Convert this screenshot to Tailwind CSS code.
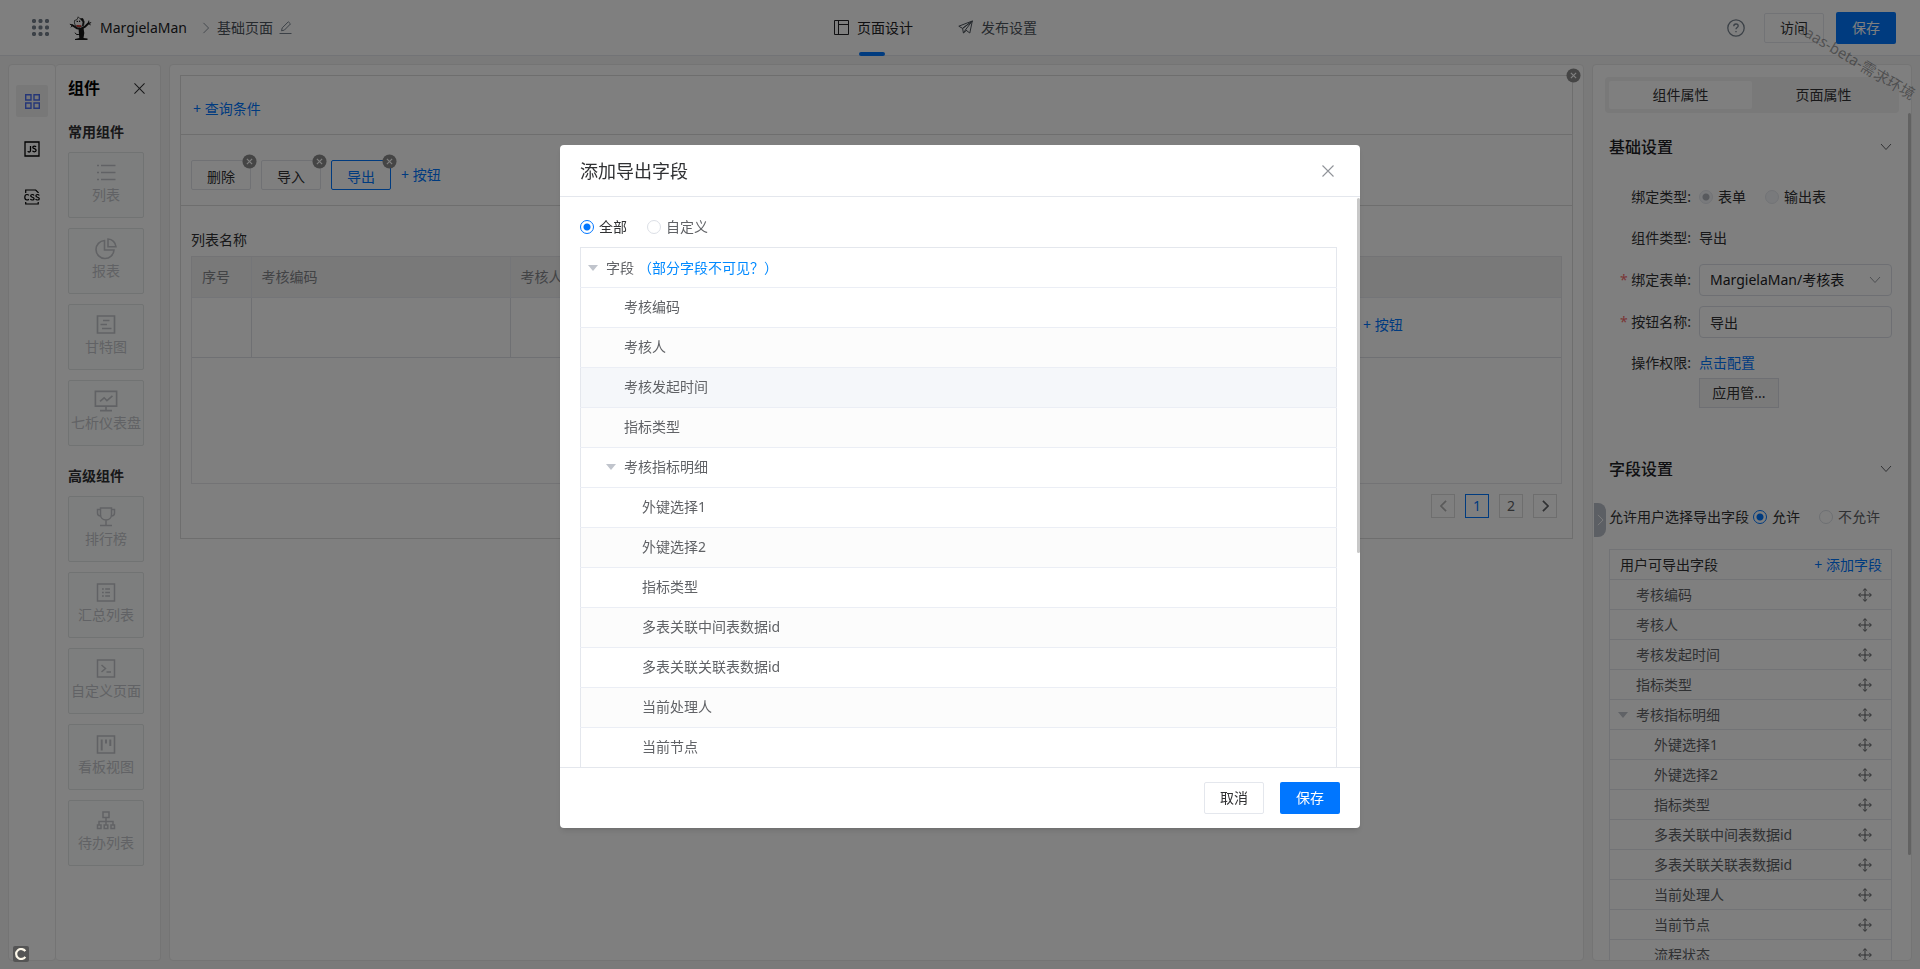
<!DOCTYPE html>
<html lang="zh-CN">
<head>
<meta charset="utf-8">
<title>MargielaMan - 基础页面</title>
<script src="https://cdn.jsdelivr.net/npm/@tailwindcss/browser@4"></script>
</head>
<body class="h-screen overflow-hidden bg-[#f4f4f4] font-['Noto_Sans','Noto_Sans_CJK_SC',sans-serif] text-sm leading-5 text-[#303133]">

<svg class="hidden">
  <symbol id="i-x" viewBox="0 0 12 12"><path d="M.5.500l11 11M11.500.500L.5 11.500" fill="none" stroke="currentColor" stroke-width="1.100"/></symbol>
  <symbol id="i-down" viewBox="0 0 12 8"><path d="M1 1l5 5.500 5-5.500" fill="none" stroke="currentColor"/></symbol>
  <symbol id="i-right" viewBox="0 0 8 14"><path d="M1 1l6 6-6 6" fill="none" stroke="currentColor"/></symbol>
  <symbol id="i-badge" viewBox="0 0 16 16"><circle cx="8" cy="8" r="7.500" fill="currentColor"/><path d="M5.200 5.200l5.600 5.600M10.800 5.200l-5.600 5.600" stroke="#fff" stroke-width="1.300"/></symbol>
  <symbol id="i-move" viewBox="0 0 14 14"><path d="M7 .8v12.400M.8 7h12.400M4.800 2.800L7 .7l2.200 2.100M4.800 11.200L7 13.300l2.200-2.100M2.800 4.800L.7 7l2.100 2.200M11.200 4.800L13.300 7l-2.100 2.200" fill="none" stroke="currentColor"/></symbol>
  <symbol id="c-list" viewBox="0 0 24 24"><path d="M3 4.500h2M3 11.500h2M3 18.500h2M7 4.500h14.500M7 11.500h14.500M7 18.500h14.500" fill="none" stroke="currentColor" stroke-width="1.500"/></symbol>
  <symbol id="c-pie" viewBox="0 0 24 24"><path d="M10.500 3.500a9 9 0 1 0 9.500 9.500h-9.500zM14 2v7.800h8A8.500 8.500 0 0 0 14 2z" fill="none" stroke="currentColor" stroke-width="1.600"/></symbol>
  <symbol id="c-gantt" viewBox="0 0 24 24"><path d="M3.500 3h17v17h-17zM9 7.500h6.500M6.500 11.500H13M8 15.500h9.500" fill="none" stroke="currentColor" stroke-width="1.700"/></symbol>
  <symbol id="c-board" viewBox="0 0 26 24"><path d="M1.500 1.500h23v16h-23zM13 17.500V22M6.500 22.500h13M6.500 12.500l4.500-4 3 3 6-5" fill="none" stroke="currentColor" stroke-width="1.800"/></symbol>
  <symbol id="c-cup" viewBox="0 0 24 24"><path d="M6.500 3h11v6.500c0 3.500-2.500 5.500-5.500 5.500s-5.500-2-5.500-5.500zM6.500 4.500h-3V8c0 1.800 1.300 3 3.200 3M17.500 4.500h3V8c0 1.800-1.300 3-3.200 3M12 15v5M6 20.500h12" fill="none" stroke="currentColor" stroke-width="1.500"/></symbol>
  <symbol id="c-sum" viewBox="0 0 24 24"><path d="M3.500 3h17v17h-17zM8 8h1.800M8 11.500h1.800M8 15h1.800M11.200 8H16M11.200 11.500H16M11.200 15H16" fill="none" stroke="currentColor" stroke-width="1.500"/></symbol>
  <symbol id="c-code" viewBox="0 0 24 24"><path d="M3.500 3h17v17h-17zM7.500 8l4 3.500-4 3.500M12.500 15H17" fill="none" stroke="currentColor" stroke-width="1.500"/></symbol>
  <symbol id="c-kanban" viewBox="0 0 24 24"><path d="M3.500 3h17v17h-17z" fill="none" stroke="currentColor" stroke-width="1.600"/><path d="M7.700 6.500v11M12 6.500v4M16.300 6.500v6.500" stroke="currentColor" stroke-width="2"/></symbol>
  <symbol id="c-tree" viewBox="0 0 24 24"><path d="M9 3h6v5.500H9zM12 8.500V16M5 16v-3.500h14V16M3.500 16h3.500v3.500H3.500zM10.200 16h3.600v3.500h-3.600zM17 16h3.500v3.500H17z" fill="none" stroke="currentColor" stroke-width="1.500"/></symbol>
</svg>

<div class="flex h-full flex-col">
  <header class="grid h-14 shrink-0 grid-cols-[1fr_auto_1fr] items-center border-b border-[#e4e7ed] bg-white pr-6 pl-8">
    <div class="flex items-center">
      <svg class="mr-5 size-[17px] text-[#78838f]" viewBox="0 0 17 17" fill="currentColor"><path d="M1 0h2l1 1v2l-1 1H1L0 3V1zM7.500 0h2l1 1v2l-1 1h-2l-1-1V1zM14 0h2l1 1v2l-1 1h-2l-1-1V1zM1 6.500h2l1 1v2l-1 1H1l-1-1v-2zM7.500 6.500h2l1 1v2l-1 1h-2l-1-1v-2zM14 6.500h2l1 1v2l-1 1h-2l-1-1v-2zM1 13h2l1 1v2l-1 1H1l-1-1v-2zM7.500 13h2l1 1v2l-1 1h-2l-1-1v-2zM14 13h2l1 1v2l-1 1h-2l-1-1v-2z"/></svg>
      <svg class="mr-2 h-6 w-[23px]" viewBox="0 0 23 24"><g fill="none" stroke="#161616" stroke-linecap="round"><path d="M3 9l5 3.200 4 .5 4-2 3.500-3.500" stroke-width="2"/><path d="M1.200 8.300l2 1M2.200 11l1.500-1.500M19.500 7.500l.3-2.500M19.500 7.500l2.300-.8M19.500 7.500l1.800 1.200"/><path d="M9.500 18.500H7.500L6.300 17"/></g><path d="M9.500 12h5l.8 5-.8 5 4 .6v1.400H6v-1l4.300-1z" fill="#161616"/><path d="M5.500 4.500L8 3.600 9.200.8l1.800 2 2.800-.3 1.400 3.300-.6 3.700-4.200 1.500-4-1.400-1-2.600z" fill="#f4f4f4" stroke="#161616" stroke-width=".7"/><path d="M11 2.800l2.800-.3 1.400 3.300-.6 3.700-1.600.5.6-4z" fill="#161616"/><path d="M7.300 9l5 .3-.5 1.800-3.800-.3z" fill="#c9302a"/><circle cx="8.300" cy="5.400" r=".7"/><circle cx="10.600" cy="5.300" r=".7"/></svg>
      <span class="text-[#202124]">MargielaMan</span>
      <svg class="mr-[7px] ml-[15px] h-3 w-2 text-[#78838f]"><use href="#i-right"/></svg>
      <span class="text-[#4d545c]">基础页面</span>
      <button aria-label="编辑名称" class="ml-1.5 text-[#78838f]"><svg class="size-[13px]" viewBox="0 0 13 13" fill="none" stroke="currentColor"><path d="M.5 12.500h12M2.500 9.800l.7-2.900L9.300.8l2.200 2.100-6.100 6.200z"/></svg></button>
    </div>
    <nav class="flex gap-[45px] self-stretch pr-[57px]">
      <a href="#design" class="relative flex items-center gap-2 text-[#202124]">
        <svg class="size-[15px]" viewBox="0 0 15 15" fill="none" stroke="currentColor"><path d="M.5.500h14v14H.5zM4.500.500v14M4.500 4.500h10"/></svg>页面设计
        <span class="absolute -bottom-px left-[25px] h-1 w-[26px] rounded-full bg-[#0076ff]"></span>
      </a>
      <a href="#publish" class="flex items-center gap-2 text-[#4d545c]">
        <svg class="size-[15px]" viewBox="0 0 15 15" fill="none" stroke="currentColor" stroke-linejoin="round"><path d="M14.300 1L.8 6.200l3.800 2.200zM14.300 1l-2.500 12-4.300-3.200M14.300 1L4.600 8.400l.8 4.600 2.100-3.200zM5.400 13l2.900-2.500"/></svg>发布设置
      </a>
    </nav>
    <div class="flex items-center justify-end">
      <button aria-label="帮助" class="mr-[19px] text-[#78838f]"><svg class="size-[18px]" viewBox="0 0 18 18" fill="none" stroke="currentColor" stroke-width="1.300"><circle cx="9" cy="9" r="8.200"/><path d="M6.800 7.200c0-1.400 1-2.200 2.200-2.200s2.200.8 2.200 2c0 1.500-2.200 1.700-2.200 3.300M9 12v1.300"/></svg></button>
      <button class="mr-3 h-[30px] w-[60px] rounded-xs border border-[#e4e7ed]">访问</button>
      <button class="h-8 w-[60px] rounded-xs bg-[#0076ff] text-white">保存</button>
    </div>
  </header>

  <main class="flex min-h-0 flex-1 p-2">
    <div class="flex w-12 shrink-0 flex-col items-center gap-4 rounded border border-[#e8e8e8] bg-white pt-5">
      <button aria-label="组件" class="flex size-8 items-center justify-center rounded-xs bg-[#f0f0f0] text-[#4a6df0]"><svg class="size-[15px]" viewBox="0 0 15 15" fill="none" stroke="currentColor" stroke-width="1.400"><path d="M.7.700h5.300v5.300H.7zM9 .7h5.300v5.300H9zM.7 9h5.300v5.300H.7zM9 9h5.300v5.300H9z"/></svg></button>
      <button aria-label="JS" class="flex size-8 items-center justify-center text-black"><svg class="size-4" viewBox="0 0 16 16" fill="none" stroke="currentColor" stroke-width="1.300"><path d="M1 1h14v14H1zM6.500 5v4.500c0 1-.5 1.500-1.300 1.500-.7 0-1.200-.3-1.400-.9M12 6c-.4-.6-1-.9-1.700-.9-.9 0-1.500.4-1.500 1.200 0 1.900 3.300.9 3.300 3 0 .9-.7 1.500-1.700 1.500-.9 0-1.500-.3-1.900-1"/></svg></button>
      <button aria-label="CSS" class="flex size-8 items-center justify-center text-black"><svg class="size-4" viewBox="0 0 16 16" fill="none" stroke="currentColor" stroke-width="1.200"><path d="M1.700 4V1h10l2.500 2.500V4M1.700 13v2h12.500v-2M4.800 6.400C4.400 5.800 3.900 5.500 3 5.500 1.600 5.500.8 6.600.8 8.300S1.600 11 3 11c.9 0 1.400-.3 1.800-.9M10 6.500c-.3-.7-.9-1-1.700-1-1 0-1.600.5-1.600 1.300 0 1.900 3.400.9 3.400 2.900 0 .9-.7 1.300-1.800 1.300-.9 0-1.500-.3-1.900-1M15.200 6.500c-.3-.7-.9-1-1.700-1-1 0-1.600.5-1.600 1.300 0 1.900 3.400.9 3.400 2.900 0 .9-.7 1.300-1.800 1.300-.9 0-1.500-.3-1.900-1"/></svg></button>
    </div>

    <aside class="w-[105px] shrink-0 rounded border border-l-0 border-[#e8e8e8] bg-white pt-[11px] pl-3">
      <div class="flex items-center justify-between pr-[15px]">
        <h2 class="text-base font-bold text-black">组件</h2>
        <button aria-label="关闭组件面板" class="text-[#303133]"><svg class="size-[11px]"><use href="#i-x"/></svg></button>
      </div>
      <h3 class="mt-[22px] text-sm font-bold leading-5">常用组件</h3>
      <div id="common" class="mt-[10px] flex flex-col gap-[10px]"></div>
      <h3 class="mt-5 text-sm font-bold leading-5">高级组件</h3>
      <div id="advanced" class="mt-[10px] flex flex-col gap-[10px]"></div>
    </aside>

    <section class="ml-2 min-w-0 flex-1 rounded border border-[#e8e8e8] bg-white p-[10px]">
      <div class="relative border border-[#dcdcdc]">
        <button aria-label="移除列表" class="absolute -top-2 -right-[9px] text-[#8a8a8a]"><svg class="size-[15px]"><use href="#i-badge"/></svg></button>
        <div class="flex h-[59px] items-center border-b border-[#dcdcdc] pt-2 pl-3"><button class="text-[#0076ff]">+ 查询条件</button></div>
        <div class="flex h-[71px] items-center gap-[10px] border-b border-[#dcdcdc] pl-[10px] pt-[10px]">
          <div class="relative"><button class="h-[30px] w-[60px] rounded-xs border border-[#e0e3e9] pt-1">删除</button><button aria-label="移除删除" class="absolute -top-1.5 -right-1.5 text-[#8a8a8a]"><svg class="size-[15px]"><use href="#i-badge"/></svg></button></div>
          <div class="relative"><button class="h-[30px] w-[60px] rounded-xs border border-[#e0e3e9] pt-1">导入</button><button aria-label="移除导入" class="absolute -top-1.5 -right-1.5 text-[#8a8a8a]"><svg class="size-[15px]"><use href="#i-badge"/></svg></button></div>
          <div class="relative"><button class="h-[30px] w-[60px] rounded-xs border border-[#0076ff] pt-1 text-[#0076ff]">导出</button><button aria-label="移除导出" class="absolute -top-1.5 -right-1.5 text-[#8a8a8a]"><svg class="size-[15px]"><use href="#i-badge"/></svg></button></div>
          <button class="text-[#0076ff]">+ 按钮</button>
        </div>
        <div class="px-[10px] pt-6 pb-5">
          <h3>列表名称</h3>
          <div class="mt-1.5 h-[228px] border border-[#e6e6ea]">
            <table class="w-full table-fixed border-collapse text-left">
              <colgroup><col class="w-[59px]"><col class="w-[259px]"><col class="w-[259px]"><col class="w-[259px]"><col></colgroup>
              <thead><tr class="h-10 bg-[#f2f2f2] text-[#84868b]"><th class="border-r border-b border-[#e9ebf1] pl-[10px] font-normal">序号</th><th class="border-r border-b border-[#e9ebf1] pl-[10px] font-normal">考核编码</th><th class="border-r border-b border-[#e9ebf1] pl-[10px] font-normal">考核人</th><th class="border-b border-[#e9ebf1]"></th><th class="border-b border-[#e9ebf1]"></th></tr></thead>
              <tbody><tr class="h-[60px]"><td class="border-r border-b border-[#dfe1e6]"></td><td class="border-r border-b border-[#dfe1e6]"></td><td class="border-r border-b border-[#dfe1e6]"></td><td class="border-b border-[#dfe1e6]"></td><td class="border-b border-[#dfe1e6] pb-1 pl-[335px]"><button class="text-[#0076ff]">+ 按钮</button></td></tr></tbody>
            </table>
          </div>
          <div class="mt-[10px] flex justify-end gap-[10px] pr-[5px]">
            <button aria-label="上一页" class="flex size-6 items-center justify-center border border-[#dcdcdc] text-[#b4b4b4]"><svg class="h-3 w-[7px] rotate-180" viewBox="0 0 8 14"><path d="M1 1l6 6-6 6" fill="none" stroke="currentColor" stroke-width="2"/></svg></button>
            <button class="size-6 border border-[#0076ff] text-[#0076ff]">1</button>
            <button class="size-6 border border-[#dcdcdc] text-[#606266]">2</button>
            <button aria-label="下一页" class="flex size-6 items-center justify-center border border-[#dcdcdc] text-[#606266]"><svg class="h-3 w-[7px]" viewBox="0 0 8 14"><path d="M1 1l6 6-6 6" fill="none" stroke="currentColor" stroke-width="2"/></svg></button>
          </div>
        </div>
      </div>
    </section>

    <aside class="relative ml-2 w-80 shrink-0 overflow-hidden rounded border border-[#e8e8e8] bg-white pt-3 pr-3 pl-3">
      <div class="absolute top-[48px] right-0 h-[742px] w-[3px] rounded-full bg-[#c4c4c4]"></div>
      <button aria-label="收起属性面板" class="absolute top-[438px] left-px flex h-[34px] w-3 items-center justify-center rounded-r-lg bg-[#b9bec8] text-white"><svg class="h-3 w-[7px]"><use href="#i-right"/></svg></button>
      <div class="flex h-9 rounded bg-[#f2f2f3] p-1">
        <button class="flex-1 rounded-xs bg-white">组件属性</button>
        <button class="flex-1">页面属性</button>
      </div>
      <div class="pr-[7px] pl-1">
        <div class="mt-6 flex items-center justify-between"><h2 class="text-base leading-5 font-medium text-[#202124]">基础设置</h2><svg class="h-2 w-3 text-[#606266]"><use href="#i-down"/></svg></div>

        <fieldset class="mt-[30px] flex items-center gap-2"><legend class="sr-only">绑定类型</legend>
          <span class="w-[82px] text-right">绑定类型:</span>
          <div class="flex items-center gap-[19px]">
            <label class="flex items-center gap-[5px]"><input type="radio" name="bind" checked disabled class="size-3.5 appearance-none rounded-full border border-[#e4e7ed] bg-[radial-gradient(#b0b4bc_3px,#f2f4f8_4px)]">表单</label>
            <label class="flex items-center gap-[5px]"><input type="radio" name="bind" disabled class="size-3.5 appearance-none rounded-full border border-[#e4e7ed] bg-[#f2f4f8]">输出表</label>
          </div>
        </fieldset>
        <div class="mt-[21px] flex gap-2"><span class="w-[82px] text-right">组件类型:</span><span>导出</span></div>
        <div class="mt-4 flex items-center gap-2">
          <label for="form" class="w-[82px] text-right"><span class="text-[#f56c6c]">*</span> 绑定表单:</label>
          <div class="relative flex-1">
            <select id="form" class="h-8 w-full appearance-none rounded border border-[#dcdfe6] bg-white pl-[10px] text-[#202124]"><option>MargielaMan/考核表</option></select>
            <svg class="pointer-events-none absolute top-3 right-[11px] h-2 w-3 text-[#9a9da3]"><use href="#i-down"/></svg>
          </div>
        </div>
        <div class="mt-[10px] flex items-center gap-2">
          <label for="name" class="w-[82px] text-right"><span class="text-[#f56c6c]">*</span> 按钮名称:</label>
          <input id="name" value="导出" class="h-8 min-w-0 flex-1 rounded border border-[#dcdfe6] px-[10px]">
        </div>
        <div class="mt-[15px] flex gap-2"><span class="w-[82px] text-right">操作权限:</span><a href="#perm" class="text-[#0076ff]">点击配置</a></div>
        <button class="mt-[5px] ml-[90px] block h-[30px] w-20 border border-[#dcdfe6] bg-[#f5f5f5]">应用管...</button>

        <div class="mt-[51px] flex items-center justify-between"><h2 class="text-base leading-5 font-medium text-[#202124]">字段设置</h2><svg class="h-2 w-3 text-[#606266]"><use href="#i-down"/></svg></div>
        <fieldset class="mt-7 flex items-center"><legend class="sr-only">允许用户选择导出字段</legend>
          <span>允许用户选择导出字段</span>
          <label class="ml-1 flex items-center gap-[5px]"><input type="radio" name="allow" checked class="size-3.5 appearance-none rounded-full border border-[#0076ff] bg-[radial-gradient(#0076ff_3px,#fff_4px)]">允许</label>
          <label class="ml-[19px] flex items-center gap-[5px] text-[#606266]"><input type="radio" name="allow" class="size-3.5 appearance-none rounded-full border border-[#dcdfe6] bg-white">不允许</label>
        </fieldset>
        <table class="mt-[22px] w-full border-collapse border border-[#e4e7ed] text-left text-[#606266]">
          <thead><tr class="h-[30px] border-b border-[#e4e7ed] text-[#303133]"><th class="pl-[10px] font-normal">用户可导出字段</th><th class="pr-[9px] text-right font-normal"><button class="text-[#0076ff]">+ 添加字段</button></th></tr></thead>
          <tbody id="exported"></tbody>
        </table>
      </div>
    </aside>
  </main>
</div>

<div class="pointer-events-none absolute top-[51px] -right-[3px] w-[132px] rotate-[31deg] text-[15px] leading-5 whitespace-nowrap text-[#303133]/45">saas-beta-需求环境</div>

<div class="fixed inset-0 flex items-start justify-center bg-black/50 pt-[145px]">
  <div role="dialog" aria-labelledby="title" class="flex w-[800px] flex-col overflow-hidden rounded bg-white shadow-md">
    <div class="flex h-[52px] shrink-0 items-center justify-between border-b border-[#e4e7ed] pr-[26px] pl-5">
      <h1 id="title" class="text-lg leading-6 text-[#303133]">添加导出字段</h1>
      <button aria-label="关闭" class="text-[#909399]"><svg class="size-3"><use href="#i-x"/></svg></button>
    </div>
    <div class="relative h-[570px] overflow-hidden px-5 pt-5">
      <div class="absolute top-px right-0 h-[355px] w-[3px] rounded-full bg-[#c8c8c8]"></div>
      <fieldset class="flex gap-5"><legend class="sr-only">导出范围</legend>
        <label class="flex items-center gap-[5px]"><input type="radio" name="scope" checked class="size-3.5 appearance-none rounded-full border border-[#0076ff] bg-[radial-gradient(#0076ff_3px,#fff_4px)]">全部</label>
        <label class="flex items-center gap-[5px] text-[#606266]"><input type="radio" name="scope" class="size-3.5 appearance-none rounded-full border border-[#dcdfe6] bg-white">自定义</label>
      </fieldset>
      <table class="mt-[10px] w-[757px] border-collapse border border-[#e4e7ed] text-left text-[#606266]">
        <thead><tr class="h-10 border-b border-[#ebeef5]"><th class="font-normal"><div class="flex items-center pl-[7px]"><svg class="mr-2 h-1.5 w-[10px] text-[#c0c4cc]" viewBox="0 0 10 6"><path d="M0 0h10L5 6z" fill="currentColor"/></svg>字段<a href="#help" class="ml-1 text-[#0089ff]">（部分字段不可见？）</a></div></th></tr></thead>
        <tbody id="fields"></tbody>
      </table>
    </div>
    <div class="flex h-[61px] shrink-0 items-center justify-end gap-4 border-t border-[#e4e7ed] pr-5">
      <button class="h-8 w-[60px] rounded-xs border border-[#e4e7ed]">取消</button>
      <button class="h-8 w-[60px] rounded-xs bg-[#0076ff] text-white">保存</button>
    </div>
  </div>
</div>

<div class="fixed bottom-[7px] left-[13px] flex size-4 items-center justify-center rounded-xs bg-[#555]">
  <svg class="size-3" viewBox="0 0 12 12"><path d="M10.300 3.200A5 5 0 1 0 10.300 8.800" fill="none" stroke="#fdf8ea" stroke-width="2.200"/></svg>
</div>

<script>
  const card = ([icon, name]) => `<button class="flex h-[66px] w-[76px] flex-col items-center rounded-xs border border-[#e2e6e6] bg-[#fbfdfc] pt-2 text-[#c3c5ca]"><svg class="size-6 shrink-0"><use href="#${icon}"/></svg><span class="whitespace-nowrap">${name}</span></button>`;
  document.getElementById('common').innerHTML = [['c-list', '列表'], ['c-pie', '报表'], ['c-gantt', '甘特图'], ['c-board', '七析仪表盘']].map(card).join('');
  document.getElementById('advanced').innerHTML = [['c-cup', '排行榜'], ['c-sum', '汇总列表'], ['c-code', '自定义页面'], ['c-kanban', '看板视图'], ['c-tree', '待办列表']].map(card).join('');

  const fields = [['考核编码', 1], ['考核人', 1], ['考核发起时间', 1], ['指标类型', 1], ['考核指标明细', 0], ['外键选择1', 2], ['外键选择2', 2], ['指标类型', 2], ['多表关联中间表数据id', 2], ['多表关联关联表数据id', 2], ['当前处理人', 2], ['当前节点', 2], ['流程状态', 2]];
  const caret = '<svg class="mr-2 h-1.5 w-[10px] text-[#c0c4cc]" viewBox="0 0 10 6"><path d="M0 0h10L5 6z" fill="currentColor"/></svg>';
  const sidePad = ['pl-2', 'pl-[26px]', 'pl-11'];
  const modalPad = ['pl-[25px]', 'pl-[43px]', 'pl-[61px]'];
  const stripe = ['bg-white', 'bg-[#fcfcfc]', 'bg-[#f5f7fa]'];
  const tone = [0, 1, 2, 1, 0, 0, 1, 0, 1, 0, 1, 0];
  document.getElementById('exported').innerHTML = fields.map(([name, level]) => `<tr class="h-[30px] border-b border-[#e4e7ed]"><td><div class="flex items-center ${sidePad[level]}">${level ? '' : caret}${name}</div></td><td><button aria-label="拖动排序" class="mr-[19px] ml-auto block"><svg class="size-3.5"><use href="#i-move"/></svg></button></td></tr>`).join('');
  document.getElementById('fields').innerHTML = fields.slice(0, 12).map(([name, level], i) => `<tr class="h-10 border-b border-[#ebeef5] ${stripe[tone[i]]}"><td><div class="flex items-center pb-0.5 ${modalPad[level]}">${level ? '' : caret}${name}</div></td></tr>`).join('');
</script>
</body>
</html>
